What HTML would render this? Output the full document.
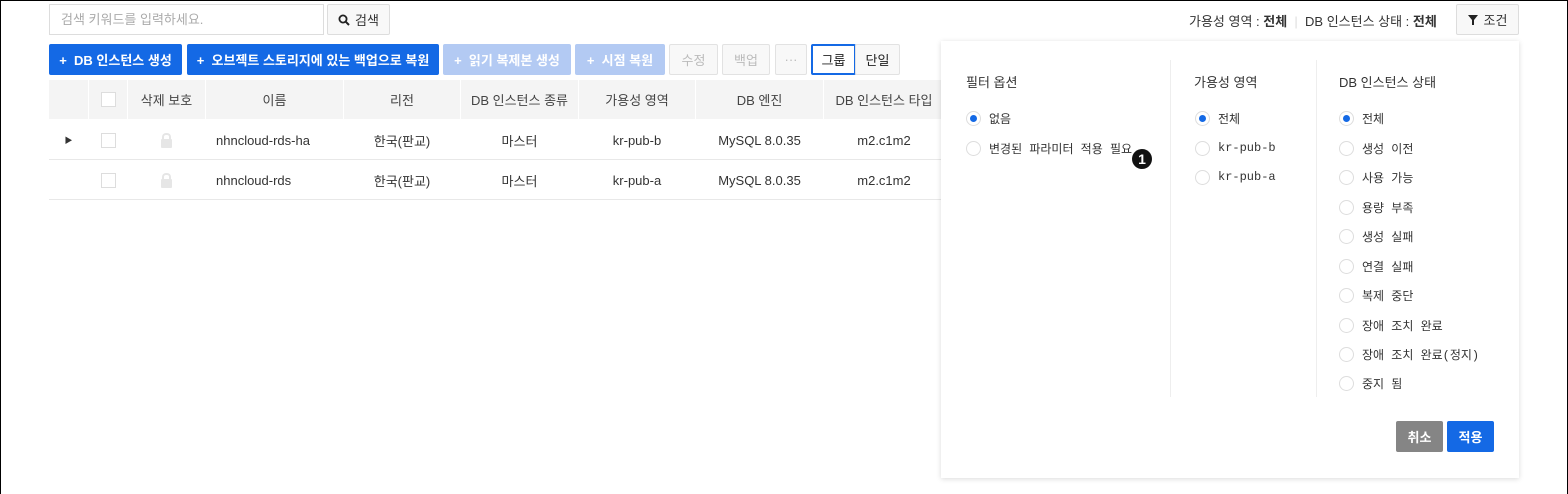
<!DOCTYPE html>
<html><head><meta charset="utf-8"><style>
*{box-sizing:border-box;margin:0;padding:0}
body{width:1568px;height:494px;position:relative;background:#fff;font-family:"Liberation Sans","Noto Sans CJK KR",sans-serif;font-size:13px;color:#333;overflow:hidden}
.a{position:absolute}
.btn{position:absolute;height:31px;border-radius:2px;display:flex;align-items:center;justify-content:center;font-size:13px}
.bl{background:#1469e5;color:#fff;font-weight:bold;border:1px solid #1469e5}
.lb{background:#b3caf3;color:#fff;font-weight:bold}
.gr{background:#f8f8f8;border:1px solid #e2e2e2;color:#bbb}
.th{position:absolute;top:80px;height:39px;background:#f4f4f4;display:flex;align-items:center;justify-content:center;color:#444}
.td{position:absolute;height:40px;display:flex;align-items:center;justify-content:center;color:#333}
.cb{width:15px;height:15px;border:1px solid #ddd;background:#fff}
.rad{position:absolute;font-family:"Liberation Mono","Noto Sans CJK KR",monospace;font-size:12px;display:flex;align-items:center;color:#333;height:20px;white-space:nowrap}
.rad i{display:inline-block;width:15px;height:15px;border:1px solid #ddd;border-radius:50%;margin-right:8px;position:relative;background:#fff}
.rad i.on:after{content:"";position:absolute;left:3px;top:3px;width:7px;height:7px;border-radius:50%;background:#1469e5}
.lock{width:11px;height:9px;background:#e6e6e6;border-radius:1px;position:relative;margin-top:6px}
.lock:before{content:"";position:absolute;left:1px;top:-6px;width:5px;height:6px;border:2px solid #e6e6e6;border-bottom:none;border-radius:4px 4px 0 0}
</style></head><body>
<div class="a" style="left:0;top:0;width:1568px;height:1px;background:#000"></div>
<div class="a" style="left:0;top:0;width:1px;height:494px;background:#000"></div>
<div class="a" style="left:1567px;top:0;width:1px;height:494px;background:#000"></div>

<div class="a" style="left:49px;top:4px;width:275px;height:31px;border:1px solid #ddd;padding:0 11px;line-height:29px;color:#aaa">검색 키워드를 입력하세요.</div>
<div class="btn" style="left:327px;top:4px;width:63px;background:#f8f8f8;border:1px solid #ddd;color:#333"><svg width="12" height="12" viewBox="0 0 12 12" style="margin-right:5px"><circle cx="5" cy="5" r="3.6" fill="none" stroke="#222" stroke-width="1.8"/><path d="M7.6 7.6L11 11" stroke="#222" stroke-width="2"/></svg>검색</div>

<div class="btn bl" style="left:49px;top:44px;width:133px">+&nbsp; DB 인스턴스 생성</div>
<div class="btn bl" style="left:187px;top:44px;width:252px">+&nbsp; 오브젝트 스토리지에 있는 백업으로 복원</div>
<div class="btn lb" style="left:443px;top:44px;width:128px">+&nbsp; 읽기 복제본 생성</div>
<div class="btn lb" style="left:575px;top:44px;width:90px">+&nbsp; 시점 복원</div>
<div class="btn gr" style="left:669px;top:44px;width:49px">수정</div>
<div class="btn gr" style="left:722px;top:44px;width:48px">백업</div>
<div class="btn gr" style="left:775px;top:44px;width:32px">···</div>
<div class="btn" style="left:811px;top:44px;width:45px;border:2px solid #1469e5;color:#222;background:#fff">그룹</div>
<div class="btn" style="left:855px;top:44px;width:45px;border:1px solid #e2e2e2;background:#f8f8f8;color:#222">단일</div>

<div class="th" style="left:49px;width:39px"></div>
<div class="th" style="left:89px;width:38px"><div class="cb"></div></div>
<div class="th" style="left:128px;width:77px">삭제 보호</div>
<div class="th" style="left:206px;width:137px">이름</div>
<div class="th" style="left:344px;width:116px">리전</div>
<div class="th" style="left:461px;width:117px">DB 인스턴스 종류</div>
<div class="th" style="left:579px;width:116px">가용성 영역</div>
<div class="th" style="left:696px;width:127px">DB 엔진</div>
<div class="th" style="left:824px;width:120px">DB 인스턴스 타입</div>

<div class="a" style="left:49px;top:159px;width:895px;height:1px;background:#e8e8e8"></div>
<div class="a" style="left:49px;top:199px;width:895px;height:1px;background:#e8e8e8"></div>
<div class="td" style="left:49px;top:120px;width:39px;font-size:8px">▶</div>
<div class="td" style="left:89px;top:120px;width:38px"><div class="cb"></div></div>
<div class="td" style="left:128px;top:120px;width:77px"><div class="lock"></div></div>
<div class="td" style="left:216px;top:120px;justify-content:flex-start">nhncloud-rds-ha</div>
<div class="td" style="left:344px;top:120px;width:116px">한국(판교)</div>
<div class="td" style="left:461px;top:120px;width:117px">마스터</div>
<div class="td" style="left:579px;top:120px;width:116px">kr-pub-b</div>
<div class="td" style="left:696px;top:120px;width:127px">MySQL 8.0.35</div>
<div class="td" style="left:824px;top:120px;width:120px">m2.c1m2</div>
<div class="td" style="left:89px;top:160px;width:38px"><div class="cb"></div></div>
<div class="td" style="left:128px;top:160px;width:77px"><div class="lock"></div></div>
<div class="td" style="left:216px;top:160px;justify-content:flex-start">nhncloud-rds</div>
<div class="td" style="left:344px;top:160px;width:116px">한국(판교)</div>
<div class="td" style="left:461px;top:160px;width:117px">마스터</div>
<div class="td" style="left:579px;top:160px;width:116px">kr-pub-a</div>
<div class="td" style="left:696px;top:160px;width:127px">MySQL 8.0.35</div>
<div class="td" style="left:824px;top:160px;width:120px">m2.c1m2</div>

<div class="a" style="left:1189px;top:11px;font-size:13px;color:#333;white-space:nowrap">가용성 영역 : <b>전체</b> <span style="color:#ddd">&nbsp;|&nbsp;</span> DB 인스턴스 상태 : <b>전체</b></div>
<div class="btn" style="left:1456px;top:4px;width:63px;background:#f8f8f8;border:1px solid #ddd;color:#333"><svg width="10" height="10" viewBox="0 0 10 10" style="margin-right:6px"><path d="M0 0H10L6 5V10H4V5Z" fill="#222"/></svg>조건</div>

<div class="a" style="left:941px;top:41px;width:578px;height:437px;background:#fff;box-shadow:0 1px 5px rgba(0,0,0,.15)"></div>
<div class="a" style="left:1170px;top:60px;width:1px;height:337px;background:#eee"></div>
<div class="a" style="left:1316px;top:60px;width:1px;height:337px;background:#eee"></div>
<div class="a" style="left:966px;top:72px;font-size:13px">필터 옵션</div>
<div class="a" style="left:1194px;top:72px;font-size:13px">가용성 영역</div>
<div class="a" style="left:1339px;top:72px;font-size:13px">DB 인스턴스 상태</div>

<div class="rad" style="left:966px;top:108px"><i class="on"></i>없음</div>
<div class="rad" style="left:966px;top:138px"><i></i>변경된 파라미터 적용 필요</div>
<div class="a" style="left:1132px;top:149px;width:20px;height:20px;border-radius:50%;background:#111;color:#fff;font-size:14px;font-weight:bold;text-align:center;line-height:20px">1</div>

<div class="rad" style="left:1195px;top:108px"><i class="on"></i>전체</div>
<div class="rad" style="left:1195px;top:138px"><i></i>kr-pub-b</div>
<div class="rad" style="left:1195px;top:167px"><i></i>kr-pub-a</div>

<div class="rad" style="left:1339px;top:108px"><i class="on"></i>전체</div>
<div class="rad" style="left:1339px;top:138px"><i></i>생성 이전</div>
<div class="rad" style="left:1339px;top:167px"><i></i>사용 가능</div>
<div class="rad" style="left:1339px;top:197px"><i></i>용량 부족</div>
<div class="rad" style="left:1339px;top:226px"><i></i>생성 실패</div>
<div class="rad" style="left:1339px;top:256px"><i></i>연결 실패</div>
<div class="rad" style="left:1339px;top:285px"><i></i>복제 중단</div>
<div class="rad" style="left:1339px;top:315px"><i></i>장애 조치 완료</div>
<div class="rad" style="left:1339px;top:344px"><i></i>장애 조치 완료(정지)</div>
<div class="rad" style="left:1339px;top:373px"><i></i>중지 됨</div>

<div class="btn" style="left:1396px;top:421px;width:47px;background:#858585;color:#fff;font-weight:bold">취소</div>
<div class="btn bl" style="left:1447px;top:421px;width:47px">적용</div>
</body></html>
